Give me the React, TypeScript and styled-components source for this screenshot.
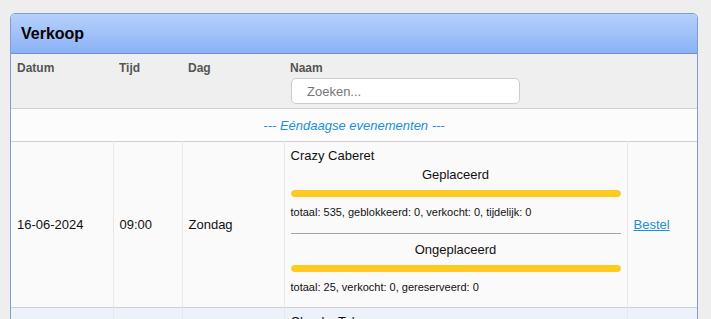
import styled, { createGlobalStyle } from "styled-components";

const GlobalStyle = createGlobalStyle`
    html, body {
        margin: 0;
        padding: 0;
        background: #eeeeee;
        font-family: "Liberation Sans", Arial, sans-serif;
    }
`;

type Section = {
    title: string;
    percent: number;
    stats: string;
};

type Event = {
    date: string;
    time: string;
    day: string;
    name: string;
    sections: Section[];
};

const events: Event[] = [
    {
        date: "16-06-2024",
        time: "09:00",
        day: "Zondag",
        name: "Crazy Caberet",
        sections: [
            { title: "Geplaceerd", percent: 100, stats: "totaal: 535, geblokkeerd: 0, verkocht: 0, tijdelijk: 0" },
            { title: "Ongeplaceerd", percent: 100, stats: "totaal: 25, verkocht: 0, gereserveerd: 0" },
        ],
    },
    {
        date: "23-06-2024",
        time: "09:00",
        day: "Zondag",
        name: "Cheeky Tak",
        sections: [
            { title: "Geplaceerd", percent: 100, stats: "totaal: 535, geblokkeerd: 0, verkocht: 0, tijdelijk: 0" },
            { title: "Ongeplaceerd", percent: 100, stats: "totaal: 25, verkocht: 0, gereserveerd: 0" },
        ],
    },
];

function App() {
    return (
        <Page>
            <GlobalStyle />
            <Panel>
                <PanelHeader>Verkoop</PanelHeader>
                <Table>
                    <colgroup>
                        <col style={{ width: 102 }} />
                        <col style={{ width: 69 }} />
                        <col style={{ width: 102 }} />
                        <col style={{ width: 343 }} />
                        <col style={{ width: 70 }} />
                    </colgroup>
                    <thead>
                        <HeadRow>
                            <Th>Datum</Th>
                            <Th>Tijd</Th>
                            <Th>Dag</Th>
                            <Th>
                                Naam
                                <Search placeholder="Zoeken..." />
                            </Th>
                            <Th></Th>
                        </HeadRow>
                    </thead>
                    <tbody>
                        <GroupRow>
                            <GroupCell colSpan={5}>--- Eéndaagse evenementen ---</GroupCell>
                        </GroupRow>
                        {events.map((ev, i) => (
                            <DataRow key={ev.date} $alt={i % 2 === 1}>
                                <Td>{ev.date}</Td>
                                <Td>{ev.time}</Td>
                                <Td>{ev.day}</Td>
                                <NameCell>
                                    <EventName>{ev.name}</EventName>
                                    {ev.sections.map((s, j) => (
                                        <Block key={s.title} $first={j === 0}>
                                            <BlockTitle>{s.title}</BlockTitle>
                                            <Bar>
                                                <BarFill style={{ width: `${s.percent}%` }} />
                                            </Bar>
                                            <Stats>{s.stats}</Stats>
                                        </Block>
                                    ))}
                                </NameCell>
                                <Td>
                                    <OrderLink href="#">Bestel</OrderLink>
                                </Td>
                            </DataRow>
                        ))}
                    </tbody>
                </Table>
            </Panel>
        </Page>
    );
}

export default App;

const Page = styled.div`
    padding: 13px 0 0 10px;
    height: 319px;
    box-sizing: border-box;
    overflow: hidden;
`;

const Panel = styled.div`
    width: 688px;
    box-sizing: border-box;
    border: 1px solid #7f9dd3;
    border-radius: 5px 5px 0 0;
    background: #fafafa;
    overflow: hidden;
`;

const PanelHeader = styled.div`
    height: 39px;
    padding-left: 10px;
    display: flex;
    align-items: center;
    background: linear-gradient(to bottom, #b6d0fc, #8bb2f6);
    border-bottom: 1px solid #6f8fcd;
    font-size: 16px;
    font-weight: bold;
    color: #000;
`;

const Table = styled.table`
    width: 686px;
    border-collapse: collapse;
    table-layout: fixed;
    font-size: 13px;
    color: #111;
`;

const HeadRow = styled.tr`
    background: #efefef;
    border-bottom: 1px solid #cfcfcf;
`;

const Th = styled.th`
    text-align: left;
    vertical-align: top;
    padding: 7px 6px 4px 6px;
    font-size: 12px;
    line-height: 15px;
    font-weight: bold;
    color: #555;
`;

const Search = styled.input`
    display: block;
    box-sizing: border-box;
    width: 229px;
    height: 26px;
    margin-top: 2px;
    margin-left: 1px;
    padding: 0 15px;
    border: 1px solid #cccccc;
    border-radius: 5px;
    background: #fff;
    font-family: "Liberation Sans", Arial, sans-serif;
    font-size: 13px;
    outline: none;
    &::placeholder {
        color: #777;
    }
`;

const GroupRow = styled.tr`
    background: #fcfcfc;
    border-bottom: 1px solid #cfcfcf;
`;

const GroupCell = styled.td`
    height: 32px;
    padding: 0;
    text-align: center;
    font-style: italic;
    color: #1b8fd8;
`;

const DataRow = styled.tr<{ $alt: boolean }>`
    background: ${(p) => (p.$alt ? "#edf2fa" : "#fafafa")};
    border-bottom: 1px solid #cfcfcf;
`;

const Td = styled.td`
    padding: 6px;
    vertical-align: middle;
    line-height: 15px;
    border-left: 1px solid #e8e8e8;
    &:first-child {
        border-left: none;
    }
`;

const NameCell = styled(Td)`
    vertical-align: top;
    padding-bottom: 13px;
`;

const EventName = styled.div`
    line-height: 15px;
`;

const Block = styled.div<{ $first: boolean }>`
    margin-top: ${(p) => (p.$first ? "4px" : "14px")};
    padding-top: ${(p) => (p.$first ? "0" : "8px")};
    border-top: ${(p) => (p.$first ? "none" : "1px solid #a3a3a3")};
`;

const BlockTitle = styled.div`
    text-align: center;
    line-height: 15px;
`;

const Bar = styled.div`
    margin-top: 8px;
    height: 7px;
    border-radius: 4px;
    background: #eeeeee;
    overflow: hidden;
`;

const BarFill = styled.div`
    height: 100%;
    border-radius: 4px;
    background: #ffcb20;
`;

const Stats = styled.div`
    margin-top: 9px;
    font-size: 11px;
    line-height: 13px;
    color: #111;
`;

const OrderLink = styled.a`
    color: #1b8fd8;
    text-decoration: underline;
`;
